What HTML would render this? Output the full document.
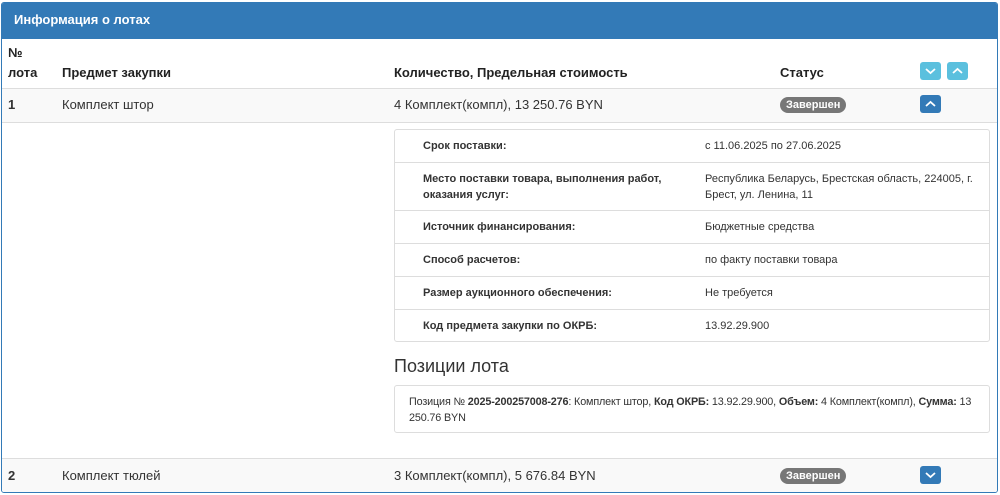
<!DOCTYPE html>
<html><head><meta charset="utf-8"><style>
*{box-sizing:border-box;margin:0;padding:0}
body{width:1000px;height:495px;background:#fff;font-family:"Liberation Sans",Arial,sans-serif;color:#333;position:relative;overflow:hidden}
.panel{position:absolute;left:1px;top:2px;width:997px;height:491px;border:1px solid #337ab7;border-radius:3px;overflow:hidden}
.hd{position:absolute;left:0;top:0;width:995px;height:36px;background:#337ab7;color:#fff;font-weight:bold;font-size:13px;padding:9px 12px}
.w{position:absolute;left:-2px;top:-2px;width:999px;height:493px}
.a{position:absolute;white-space:nowrap}
.th{font-weight:bold;font-size:13px;color:#222}
.row{position:absolute;left:0;width:999px;background:#f9f9f9;border-top:1px solid #ddd;border-bottom:1px solid #ddd}
.td{font-size:13px;color:#333}
.badge{position:absolute;background:#777;color:#fff;font-weight:bold;font-size:11px;border-radius:10px;padding:2px 6px;height:16px;line-height:12px}
.btn{position:absolute;width:21px;height:18px;border-radius:3px}
.btn svg{position:absolute;left:5px;top:5px}
.det{position:absolute;left:394px;top:128px;width:596px;height:213px;border:1px solid #ddd;border-radius:3px}
.dr{position:absolute;left:0;width:594px;border-top:1px solid #ddd;font-size:11px}
.dr b{position:absolute;left:28px;color:#333}
.dr span{position:absolute;left:310px;line-height:16px}
</style></head><body>
<div class="panel">
<div class="hd">Информация о лотах</div>
<div class="w">
<div class="a th" style="left:8px;top:44px">№</div>
<div class="a th" style="left:8px;top:64px">лота</div>
<div class="a th" style="left:62px;top:64px">Предмет закупки</div>
<div class="a th" style="left:394px;top:64px">Количество, Предельная стоимость</div>
<div class="a th" style="left:780px;top:64px">Статус</div>
<div class="btn" style="left:920px;top:61px;background:#5bc0de"><svg width="11" height="8"><path d="M1 2 L5.5 6 L10 2" stroke="#fff" stroke-width="1.8" fill="none"/></svg></div>
<div class="btn" style="left:947px;top:61px;background:#5bc0de"><svg width="11" height="8"><path d="M1 6 L5.5 2 L10 6" stroke="#fff" stroke-width="1.8" fill="none"/></svg></div>
<div class="row" style="top:87px;height:35px"></div>
<div class="a td" style="left:8px;top:96px;font-weight:bold">1</div>
<div class="a td" style="left:62px;top:96px">Комплект штор</div>
<div class="a td" style="left:394px;top:96px">4 Комплект(компл), 13 250.76 BYN</div>
<div class="badge" style="left:780px;top:96px">Завершен</div>
<div class="btn" style="left:920px;top:94px;background:#337ab7"><svg width="11" height="8"><path d="M1 6 L5.5 2 L10 6" stroke="#fff" stroke-width="1.8" fill="none"/></svg></div>
<div class="det">
<div class="dr" style="top:0;border:0;height:33px"><b style="top:10px">Срок поставки:</b><span style="top:8px">с 11.06.2025 по 27.06.2025</span></div>
<div class="dr" style="top:32px;height:48px"><b style="top:8px;line-height:16px">Место поставки товара, выполнения работ,<br>оказания услуг:</b><span style="top:8px">Республика Беларусь, Брестская область, 224005, г.<br>Брест, ул. Ленина, 11</span></div>
<div class="dr" style="top:80px;height:33px"><b style="top:10px">Источник финансирования:</b><span style="top:8px">Бюджетные средства</span></div>
<div class="dr" style="top:113px;height:33px"><b style="top:10px">Способ расчетов:</b><span style="top:8px">по факту поставки товара</span></div>
<div class="dr" style="top:146px;height:33px"><b style="top:10px">Размер аукционного обеспечения:</b><span style="top:8px">Не требуется</span></div>
<div class="dr" style="top:179px;height:33px"><b style="top:10px">Код предмета закупки по ОКРБ:</b><span style="top:8px">13.92.29.900</span></div>
</div>
<div class="a" style="left:394px;top:355px;font-size:18px;color:#333">Позиции лота</div>
<div style="position:absolute;left:394px;top:384px;width:596px;height:48px;border:1px solid #ddd;border-radius:3px;font-size:10.8px;letter-spacing:-0.15px;line-height:16px;padding:8px 12px 8px 14px">Позиция № <b>2025-200257008-276</b>: Комплект штор, <b>Код ОКРБ:</b> 13.92.29.900, <b>Объем:</b> 4 Комплект(компл), <b>Сумма:</b> 13 250.76 BYN</div>
<div class="row" style="top:457px;height:38px;border-bottom:0"></div>
<div class="a td" style="left:8px;top:467px;font-weight:bold">2</div>
<div class="a td" style="left:62px;top:467px">Комплект тюлей</div>
<div class="a td" style="left:394px;top:467px">3 Комплект(компл), 5 676.84 BYN</div>
<div class="badge" style="left:780px;top:467px">Завершен</div>
<div class="btn" style="left:920px;top:465px;background:#337ab7"><svg width="11" height="8"><path d="M1 2 L5.5 6 L10 2" stroke="#fff" stroke-width="1.8" fill="none"/></svg></div>
</div>
</div>
</body></html>
